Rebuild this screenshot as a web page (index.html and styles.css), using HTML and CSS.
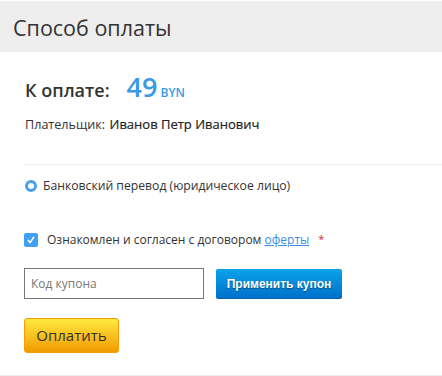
FILE: index.html
```html
<!DOCTYPE html>
<html>
<head>
<meta charset="utf-8">
<link rel="stylesheet" href="styles.css">
</head>
<body>
<div class="page">
  <div class="header">Способ оплаты</div>
  <div class="content">
    <div class="sum">
      <span class="sum-label">К оплате:</span>
      <span class="sum-value">49</span>
      <span class="sum-cur">BYN</span>
    </div>
    <div class="payer"><span class="payer-label">Плательщик:</span> <span class="payer-name">Иванов Петр Иванович</span></div>
    <div class="sep"></div>
    <div class="radio-row">
      <span class="radio"></span>
      <span>Банковский перевод (юридическое лицо)</span>
    </div>
    <div class="check-row">
      <span class="check"><svg width="14" height="14" viewBox="0 0 14 14"><path d="M4.3 7.4 L6.1 9.6 L9.6 4.4" fill="none" stroke="#fff" stroke-width="1.6" stroke-linecap="round" stroke-linejoin="round"/></svg></span>
      <span>Ознакомлен и согласен с договором <a class="link">оферты</a></span>
      <span class="req">*</span>
    </div>
    <div class="coupon-row">
      <div class="coupon-input">Код купона</div>
      <div class="coupon-btn">Применить купон</div>
    </div>
    <div class="pay-btn">Оплатить</div>
  </div>
  <div class="bottom"></div>
</div>
</body>
</html>
```
FILE: styles.css
```css
html, body {
  margin: 0;
  padding: 0;
  background: #fff;
}
body {
  font-family: "Open Sans", "Noto Sans", sans-serif;
  color: #333;
}
.page {
  width: 442px;
  height: 376px;
  position: relative;
  overflow: hidden;
  display: flex;
  flex-direction: column;
}
.header {
  margin-top: 1px;
  height: 51px;
  background: #eeeeee;
  border-top: 1px solid #f4f4f4;
  box-sizing: border-box;
  font-size: 21.5px;
  line-height: 51px;
  padding-left: 13px;
  color: #333;
}
.content {
  padding-left: 24px;
  display: flex;
  flex-direction: column;
  flex: 1;
}
.sum {
  display: flex;
  align-items: baseline;
  margin-top: 16px;
  height: 32px;
}
.sum-label {
  font-size: 18px;
  font-weight: 600;
  padding-left: 1px;
  color: #333;
}
.sum-value {
  font-size: 27px;
  font-weight: 600;
  color: #3a99e6;
  margin-left: 17px;
}
.sum-cur {
  font-size: 12px;
  font-weight: 600;
  color: #3a99e6;
  margin-left: 3px;
}
.payer {
  margin-top: 15px;
  font-size: 13px;
  line-height: 18px;
  color: #333;
  padding-left: 1px;
}
.payer-label {
  font-size: 12.6px;
}
.payer-name {
  color: #1f1f1f;
  margin-left: 1px;
  -webkit-text-stroke: 0.2px #1f1f1f;
}
.sep {
  margin-top: 30px;
  height: 1px;
  background: #ececec;
}
.radio-row {
  margin-top: 12px;
  display: flex;
  align-items: center;
  font-size: 12.2px;
  line-height: 18px;
  padding-left: 1px;
}
.radio {
  width: 12px;
  height: 12px;
  border-radius: 50%;
  box-sizing: border-box;
  border: 3.5px solid #4a9ff0;
  background: #fff;
  margin-right: 6px;
}
.check-row {
  margin-top: 36px;
  display: flex;
  align-items: center;
  font-size: 12px;
  line-height: 18px;
}
.check {
  width: 14px;
  height: 14px;
  border-radius: 2px;
  background: #42a0f2;
  margin-right: 9px;
  display: flex;
}
.link {
  color: #3a8ee6;
  text-decoration: underline;
}
.req {
  color: #c9302c;
  font-size: 11px;
  align-self: flex-start;
  margin-left: 9px;
  line-height: 12px;
  margin-top: 2px;
}
.coupon-row {
  margin-top: 19px;
  display: flex;
  align-items: flex-start;
}
.coupon-input {
  width: 180px;
  height: 31px;
  box-sizing: border-box;
  border: 1px solid #777;
  font-size: 12px;
  line-height: 29px;
  padding-left: 6px;
  color: #777;
}
.coupon-btn {
  margin-left: 12px;
  margin-top: 1px;
  width: 126px;
  height: 30px;
  box-sizing: border-box;
  border-radius: 2px;
  background: linear-gradient(#0aa3ea, #0071cb);
  border-bottom: 1px solid #0a5fa8;
  color: #fff;
  font-family: "Liberation Sans", Arial, sans-serif;
  font-weight: bold;
  font-size: 12px;
  line-height: 30px;
  text-align: center;
  text-shadow: 0 1px 1px rgba(0,0,0,0.45);
}
.pay-btn {
  margin-top: 19px;
  width: 95px;
  height: 35px;
  box-sizing: border-box;
  border: 1px solid #f0a000;
  border-radius: 3px;
  background: linear-gradient(#ffe940, #f29a00);
  font-size: 15px;
  line-height: 33px;
  text-align: center;
  color: #333;
}
.bottom {
  height: 1px;
  background: #eeeeee;
}
```
